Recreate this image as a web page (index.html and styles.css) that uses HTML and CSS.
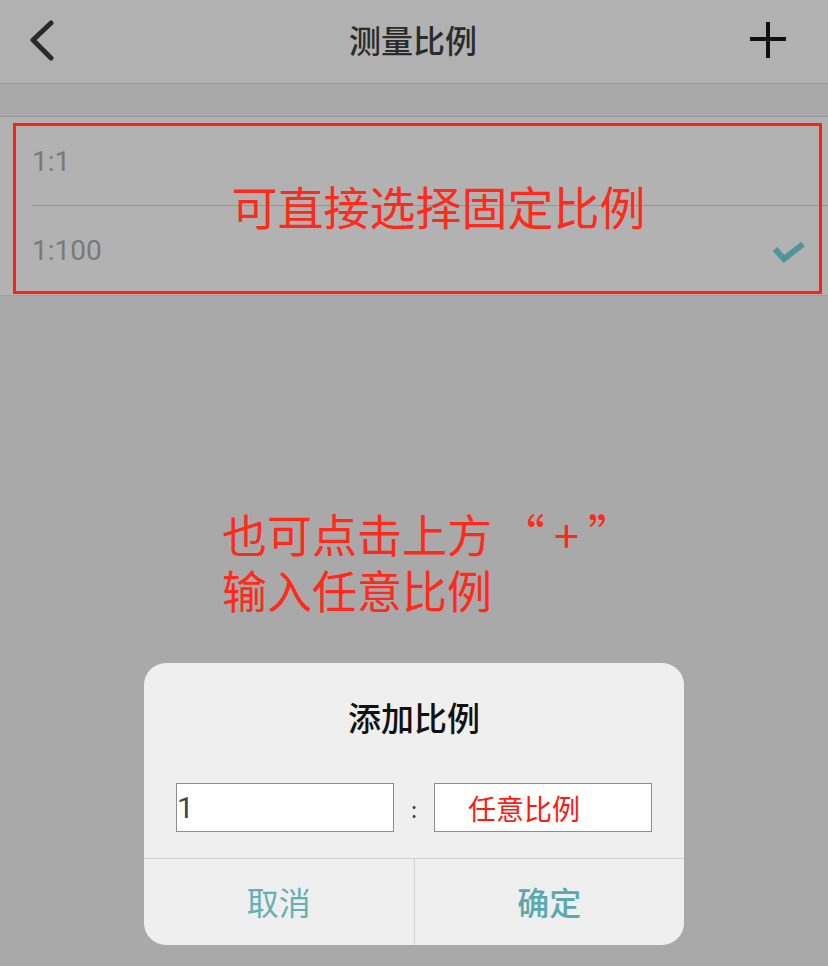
FILE: index.html
```html
<!DOCTYPE html>
<html lang="zh-CN">

<head>
    <meta charset="UTF-8">
    <meta name="viewport" content="width=device-width, initial-scale=1.0">
    <title>测量比例</title>
    <link rel="stylesheet" href="styles.css">
</head>

<body>

    <div class="page">
        <header class="topbar">
            <button class="icon-btn back">
                <svg width="40" height="44" viewBox="0 0 40 44">
                    <polyline points="21,4 3,21 21,39" fill="none" stroke="#2a2a2a" stroke-width="5" stroke-linecap="round" stroke-linejoin="round" />
                </svg>
            </button>
            <h1 class="title">测量比例</h1>
            <button class="icon-btn add">
                <svg width="40" height="40" viewBox="0 0 40 40">
                    <path d="M20 2 V38 M2 19 H38" stroke="#111" stroke-width="4" />
                </svg>
            </button>
        </header>

        <div class="band"></div>

        <ul class="scale-list">
            <li class="scale-item">1:1</li>
            <li class="scale-item selected">
                <span>1:100</span>
                <svg class="check" width="34" height="24" viewBox="0 0 34 24">
                    <polyline points="3,9 12,19 31,4" fill="none" stroke="#4f9698" stroke-width="6" stroke-linejoin="miter" />
                </svg>
            </li>
        </ul>

        <!-- annotations -->
        <div class="note-box">
            <span class="note-big">可直接选择固定比例</span>
        </div>
        <div class="note-plus">
            <div class="note-line">也可点击上方<span class="quote">“+”</span></div>
            <div class="note-line">输入任意比例</div>
        </div>

        <div class="dialog">
            <div class="dialog-title">添加比例</div>
            <div class="dialog-inputs">
                <input type="text" class="ratio-input left" value="1">
                <span class="colon">:</span>
                <input type="text" class="ratio-input right" placeholder="任意比例">
            </div>
            <div class="dialog-actions">
                <button class="action">取消</button>
                <button class="action ok">确定</button>
            </div>
        </div>
    </div>

</body>

</html>
```

FILE: styles.css
```css
body {
    margin: 0;
    font-family: "Noto Sans CJK SC", "Noto Sans", sans-serif;
    background-color: #a9a9aa;
}

.page {
    position: relative;
    width: 828px;
    height: 966px;
    overflow: hidden;
}

.topbar {
    height: 83px;
    background-color: #b1b1b1;
    border-bottom: 1px solid #999;
    display: flex;
    align-items: center;
    justify-content: space-between;
    padding: 0 40px 0 30px;
}

.icon-btn {
    background: none;
    border: none;
    padding: 0;
    display: flex;
}

.back {
    margin-top: -2px;
}

.add {
    margin-top: -4px;
}

.title {
    margin: 0;
    font-size: 32px;
    font-weight: 500;
    color: #2b2b2b;
    margin-top: -6px;
    margin-left: 8px;
}

.band {
    height: 32px;
    background-color: #a9a9a9;
    border-bottom: 1px solid #9c9c9c;
}

.scale-list {
    list-style: none;
    margin: 0;
    padding: 0 0 0 32px;
    background-color: #b2b2b2;
    border-bottom: 1px solid #9f9f9f;
}

.scale-item {
    height: 88px;
    display: flex;
    align-items: center;
    justify-content: space-between;
    padding-right: 22px;
    font-family: "Roboto", "Liberation Sans", sans-serif;
    font-size: 28px;
    color: #7a7a7a;
}

.scale-item + .scale-item {
    border-top: 1px solid #969696;
    height: 89px;
}

.check {
    margin-top: 2px;
}

.note-box {
    position: absolute;
    left: 13px;
    top: 123px;
    width: 803px;
    height: 165px;
    border: 3px solid #ff2014;
    display: flex;
    justify-content: center;
    align-items: center;
}

.note-big {
    font-size: 46px;
    line-height: 1;
    color: #ff2a1a;
    margin-left: 42px;
    margin-top: -8px;
}

.note-plus {
    position: absolute;
    left: 222px;
    top: 506px;
    font-size: 45px;
    line-height: 56px;
    color: #ff2a1a;
}

.quote {
    margin-left: 8px;
    letter-spacing: 9px;
}

.dialog {
    position: absolute;
    left: 144px;
    top: 663px;
    width: 540px;
    height: 282px;
    background-color: #efefef;
    border-radius: 22px;
    display: flex;
    flex-direction: column;
    overflow: hidden;
}

.dialog-title {
    height: 114px;
    display: flex;
    justify-content: center;
    padding-top: 38px;
    box-sizing: border-box;
    font-size: 33px;
    font-weight: 500;
    color: #111;
    line-height: 1;
}

.dialog-inputs {
    display: flex;
    padding: 6px 32px 0;
    height: 75px;
    align-items: flex-start;
}

.ratio-input {
    width: 218px;
    height: 49px;
    box-sizing: border-box;
    border: 1px solid #8e8e8e;
    background-color: #fff;
    margin: 0;
    outline: none;
    font-family: "Roboto", "Liberation Sans", sans-serif;
}

.ratio-input.left {
    padding: 0;
    font-size: 30px;
    color: #444;
}

.ratio-input.right {
    padding: 0 0 0 33px;
    font-family: "Noto Sans CJK SC", sans-serif;
    font-size: 28px;
}

.ratio-input.right::placeholder {
    color: #ff1a10;
    opacity: 1;
}

.colon {
    width: 40px;
    text-align: center;
    font-size: 22px;
    color: #444;
    line-height: 49px;
    margin-top: 1px;
}

.dialog-actions {
    flex: 1;
    display: flex;
    border-top: 1px solid #cfcfcf;
}

.action {
    flex: 1;
    background: none;
    border: none;
    padding: 0 0 2px;
    font-family: "Noto Sans CJK SC", sans-serif;
    font-size: 32px;
    color: #66b0b5;
}

.action.ok {
    border-left: 1px solid #d2d2d2;
    font-weight: 500;
    color: #5aa9ae;
}
```
